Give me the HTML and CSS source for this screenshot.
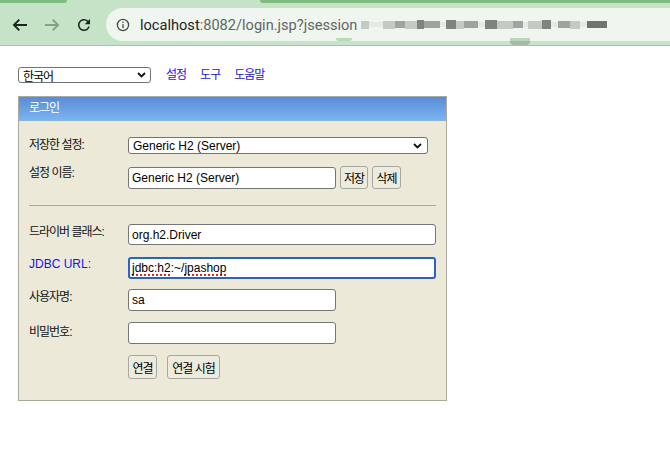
FILE: index.html
```html
<!DOCTYPE html>
<html lang="ko">
<head>
<meta charset="utf-8">
<title>H2 Console</title>
<link rel="stylesheet" href="styles.css">
</head>
<body>
<header class="chrome">
  <div class="tabstrip"><span class="tab-l"></span><span class="tab-r"></span></div>
  <div class="toolbar">
    <span class="nav-btn">
      <svg width="16" height="16" viewBox="0 0 16 16"><path d="M15 8H2M7.3 2.6L1.9 8l5.4 5.4" fill="none" stroke="#1f231f" stroke-width="1.9"/></svg>
    </span>
    <span class="nav-btn">
      <svg width="16" height="16" viewBox="0 0 16 16"><path d="M1 8h13M8.7 2.6L14.1 8l-5.4 5.4" fill="none" stroke="#8a9c8a" stroke-width="1.9"/></svg>
    </span>
    <span class="nav-btn">
      <svg width="20" height="20" viewBox="0 0 24 24"><path d="M17.65 6.35A7.958 7.958 0 0 0 12 4c-4.42 0-7.99 3.58-7.99 8s3.57 8 7.99 8c3.73 0 6.84-2.55 7.73-6h-2.08A5.99 5.99 0 0 1 12 18c-3.31 0-6-2.69-6-6s2.69-6 6-6c1.66 0 3.14.69 4.22 1.78L13 11h7V4l-2.35 2.35z" fill="#1f231f"/></svg>
    </span>
    <div class="omnibox">
      <svg class="info" width="14" height="14" viewBox="0 0 16 16"><circle cx="8" cy="8" r="6.4" fill="none" stroke="#474b47" stroke-width="1.5"/><rect x="7.25" y="7" width="1.5" height="4.6" fill="#474b47"/><circle cx="8" cy="4.9" r="0.95" fill="#474b47"/></svg>
      <span class="host">localhost</span><span class="path">:8082/login.jsp?jsession</span>
      <span class="blur" aria-hidden="true">
        <i class="b1" style="width:8px"></i>
        <i class="b0" style="width:14px"></i>
        <i class="b1" style="width:12px"></i>
        <i class="b2" style="width:10px"></i>
        <i class="b1" style="width:12px"></i>
        <i class="b3" style="width:7px"></i>
        <i class="b2" style="width:16px"></i>
        <i class="b0" style="width:6px"></i>
        <i class="b3" style="width:10px"></i>
        <i class="b1" style="width:8px"></i>
        <i class="b2" style="width:14px"></i>
        <i class="b0" style="width:7px"></i>
        <i class="b3" style="width:12px"></i>
        <i class="b1" style="width:16px"></i>
        <i class="b2" style="width:10px"></i>
        <i class="b0" style="width:5px"></i>
        <i class="b1" style="width:14px"></i>
        <i class="b3" style="width:9px"></i>
        <i class="b0" style="width:7px"></i>
        <i class="b2" style="width:12px"></i>
        <i class="b1" style="width:10px"></i>
        <i class="b0" style="width:7px"></i>
        <i class="b4" style="width:20px"></i>
      </span>
    </div>
  </div>
  <span class="mark mark-a"></span>
  <span class="mark mark-b"></span>
</header>

<main class="page">
  <div class="topbar">
    <div class="select sel-lang"><span class="ko">한국어</span>
      <svg width="9" height="6" viewBox="0 0 9 6"><path d="M1 1l3.5 3.5L8 1" fill="none" stroke="#111" stroke-width="1.8"/></svg>
    </div>
    <a class="link ko" href="#">설정</a>
    <a class="link ko" href="#">도구</a>
    <a class="link ko" href="#">도움말</a>
  </div>

  <section class="login">
    <div class="login-head ko">로그인</div>
    <div class="login-body">
      <div class="row r1">
        <span class="lbl ko">저장한 설정:</span>
        <div class="select sel-wide"><span>Generic H2 (Server)</span>
          <svg width="9" height="6" viewBox="0 0 9 6"><path d="M1 1l3.5 3.5L8 1" fill="none" stroke="#111" stroke-width="1.8"/></svg>
        </div>
      </div>
      <div class="row r2">
        <span class="lbl ko">설정 이름:</span>
        <input class="field w-short" type="text" value="Generic H2 (Server)">
        <button class="btn btn-sm ko" type="button">저장</button>
        <button class="btn btn-sm ko" type="button">삭제</button>
      </div>
      <div class="sep"></div>
      <div class="row r3">
        <span class="lbl ko">드라이버 클래스:</span>
        <input class="field w-long h21" type="text" value="org.h2.Driver">
      </div>
      <div class="row r4">
        <span class="lbl blue">JDBC URL:</span>
        <div class="field w-long focus"><span class="spell">jdbc:h2</span>:~/<span class="spell">jpashop</span></div>
      </div>
      <div class="row r5">
        <span class="lbl ko">사용자명:</span>
        <input class="field w-short" type="text" value="sa">
      </div>
      <div class="row r6">
        <span class="lbl ko">비밀번호:</span>
        <input class="field w-short" type="password" value="">
      </div>
      <div class="row r7">
        <button class="btn btn-lg ko" type="button">연결</button>
        <button class="btn btn-lg ko" type="button">연결 시험</button>
      </div>
    </div>
  </section>
</main>
</body>
</html>
```

FILE: styles.css
```css
* { box-sizing: border-box; }
html, body { margin: 0; padding: 0; }
body {
  background: #fff;
  font-family: "Liberation Sans", "Noto Sans CJK KR", sans-serif;
  font-size: 12px;
  color: #000;
  overflow: hidden;
}

/* ---------- browser chrome ---------- */
.chrome {
  position: relative;
  height: 46px;
  background: #c5e3c6;
  border-bottom: 1px solid #a7c4a8;
  overflow: hidden;
}
.tabstrip { height: 3px; display: flex; justify-content: space-between; }
.tab-l { width: 67px; background: #7dbd7f; border-bottom-right-radius: 3px; }
.tab-r { width: 410px; background: #7dbd7f; border-bottom-left-radius: 3px; }

.toolbar {
  display: flex;
  align-items: center;
  height: 33px;
  margin-top: 5px;
  padding-left: 11px;
}
.nav-btn {
  width: 18px;
  height: 20px;
  display: flex;
  align-items: center;
  justify-content: center;
  margin-right: 14px;
  flex: none;
}
.nav-btn:nth-child(3) { margin-right: 13px; }

.omnibox {
  flex: none;
  width: 600px;
  height: 33px;
  background: #eff6ef;
  border-radius: 17px;
  display: flex;
  align-items: center;
  padding-left: 10px;
  font-family: Roboto, "Liberation Sans", sans-serif;
  font-size: 14.6px;
  white-space: nowrap;
}
.info { margin-right: 10px; flex: none; }
.host { color: #1f231f; }
.path { color: #5f665f; }
.blur { display: flex; align-items: center; margin-left: 4px; height: 12px; }
.blur i { display: block; height: 8px; }
.blur .b0 { background: #e4eae4; height: 5px; }
.blur .b1 { background: #c3c9c3; }
.blur .b2 { background: #9ea49e; height: 7px; }
.blur .b3 { background: #7e847e; height: 9px; }
.blur .b4 { background: #6e746e; height: 7px; }

.mark { position: absolute; }
.mark-a { left: 336px; top: 38px; width: 16px; height: 3px; background: #b9d7b9; border-radius: 0 0 4px 4px; }
.mark-b { left: 510px; top: 38px; width: 20px; height: 7px; background: linear-gradient(#bad6ba 0 50%, #a3bba3 50%); border-radius: 0 0 4px 4px; }

/* ---------- page ---------- */
.page { padding: 21px 0 0 18px; }
.ko { letter-spacing: -1px; }

.topbar { display: flex; align-items: center; height: 16px; }
.select {
  display: flex;
  align-items: center;
  justify-content: space-between;
  background: #fff;
  border: 1px solid #727272;
  border-radius: 3px;
  padding: 0 5px 0 4px;
  flex: none;
}
.sel-lang { width: 133px; height: 16px; padding-right: 4px; }
.sel-wide { width: 300px; height: 17px; padding-right: 5px; }

.link {
  color: #1414f0;
  text-decoration: none;
  margin-left: 14px;
  line-height: 16px;
}
.topbar .link:first-of-type { margin-left: 15px; }

.login {
  margin-top: 13px;
  width: 429px;
  border: 1px solid #aba99c;
  background: #ece9d9;
}
.login-head {
  height: 24px;
  line-height: 23px;
  padding-left: 10px;
  color: #fff;
  background: linear-gradient(#5a8bd4, #7cb6f2);
}
.login-body { padding: 0 10px 21px 10px; }

.row { display: flex; align-items: flex-start; }
.lbl { width: 99px; flex: none; line-height: 16px; color: #111; }
.blue { color: #1414f0; }

.r1 { margin-top: 16px; }
.r2 { margin-top: 12px; align-items: center; }
.r2 .lbl { align-self: flex-start; margin-top: -1px; }
.r3 { margin-top: 18px; }
.r4 { margin-top: 12px; }
.r4 .lbl { margin-top: -1px; }
.r5 { margin-top: 10px; }
.r6 { margin-top: 11px; }
.r6 .lbl { margin-top: 2px; }
.r7 { margin-top: 11px; padding-left: 99px; }

.sep { margin-top: 16px; height: 1px; background: #a9a8a0; width: 407px; }

.field {
  height: 22px;
  border: 1px solid #767676;
  border-radius: 3px;
  background: #fff;
  padding: 0 3px;
  font-family: "Liberation Sans", sans-serif;
  font-size: 12px;
  color: #000;
  margin: 0;
  outline: none;
}
.w-short { width: 208px; }
.w-long { width: 308px; }
.h21 { height: 21px; }
.focus {
  border: 2px solid #2a62c9;
  padding: 0 2px;
  line-height: 18px;
}
.spell {
  text-decoration: underline dotted #e02424;
  text-decoration-thickness: 1.5px;
  text-underline-offset: 2px;
}

.btn {
  margin: 0;
  font-family: "Liberation Sans", "Noto Sans CJK KR", sans-serif;
  font-size: 12px;
  color: #000;
  background: #edebdd;
  border: 1px solid #a7a7a3;
  border-radius: 3px;
  padding: 0;
  white-space: nowrap;
  cursor: default;
}
.btn-sm { height: 23px; margin-left: 4px; width: 28px; }
.btn-sm:nth-of-type(2) { width: 29px; }
.btn-lg { height: 24px; }
.btn-lg + .btn-lg { margin-left: 10px; }
.r7 .btn-lg:first-child { width: 29px; }
.r7 .btn-lg:last-child { width: 53px; }
```
